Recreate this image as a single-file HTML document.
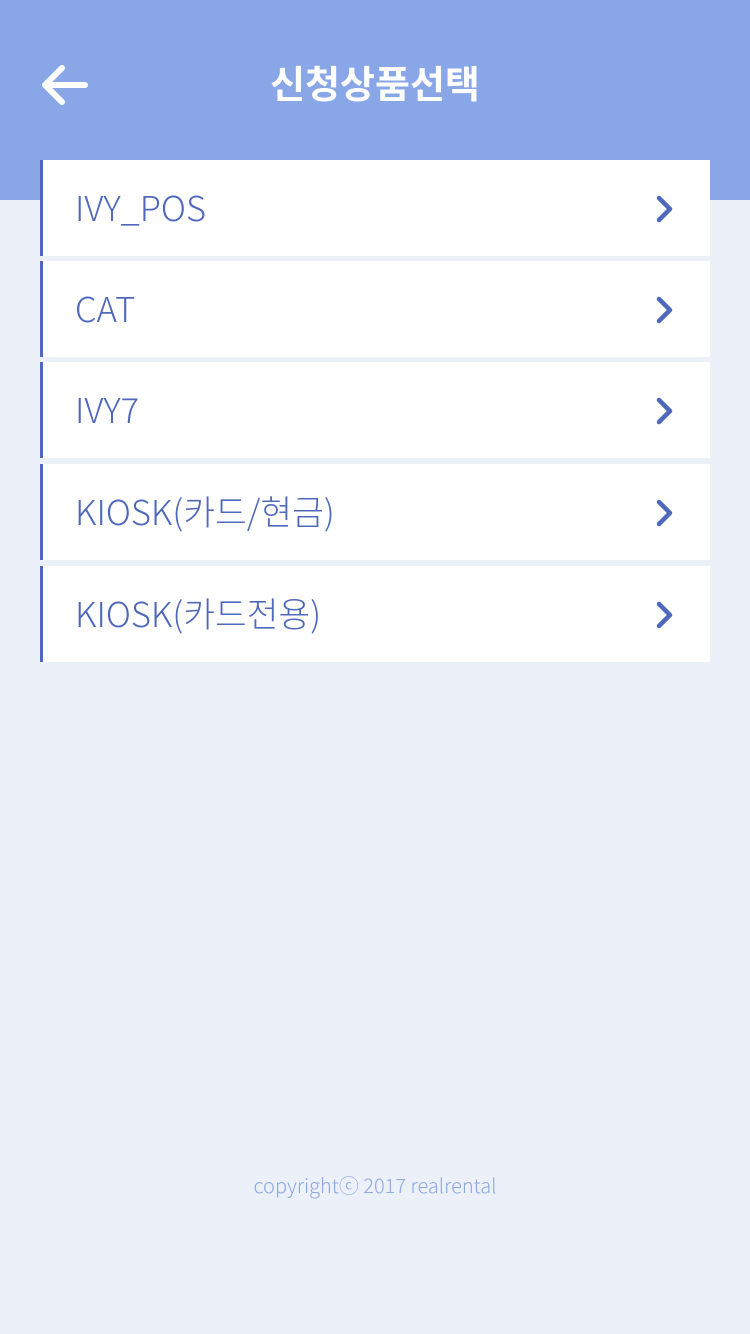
<!DOCTYPE html>
<html><head><meta charset="utf-8"><style>
body{margin:0;width:750px;height:1334px;background:#ecf0f9;font-family:"Liberation Sans","Noto Sans CJK KR",sans-serif;position:relative;overflow:hidden}
.hdr{position:absolute;left:0;top:0;width:750px;height:200px;background:#89a7e7}
.title{position:absolute;top:54px;left:0;width:750px;text-align:center;color:#fff;font-size:38px;font-weight:bold;font-family:"Noto Sans CJK KR",sans-serif}
.row{position:absolute;left:40px;width:670px;height:96px;background:#fff;border-left:3px solid #5068bb;box-sizing:border-box}
.row span{position:absolute;left:32px;top:21px;font-size:34.5px;color:#5068bb;font-family:"Noto Sans CJK KR",sans-serif;font-weight:300}
.row svg{position:absolute;left:608px;top:35px}
.foot{position:absolute;top:1170px;width:750px;text-align:center;color:#8ea8e2;font-size:20px;font-family:"Noto Sans CJK KR",sans-serif;font-weight:300}
</style></head><body>
<div class="hdr"></div>
<svg style="position:absolute;left:0;top:0" width="120" height="140"><path d="M62 68 L45 85 L62 102 M45 85 H85" stroke="#fff" stroke-width="6" fill="none" stroke-linecap="round" stroke-linejoin="round"/></svg>
<div class="title">신청상품선택</div>
<div class="row" style="top:160px"><span>IVY_POS</span><svg width="30" height="30"><path d="M8 3 L19 14 L8 25" stroke="#5068bb" stroke-width="4.5" fill="none" stroke-linecap="round" stroke-linejoin="round"/></svg></div>
<div class="row" style="top:261px"><span>CAT</span><svg width="30" height="30"><path d="M8 3 L19 14 L8 25" stroke="#5068bb" stroke-width="4.5" fill="none" stroke-linecap="round" stroke-linejoin="round"/></svg></div>
<div class="row" style="top:362px"><span>IVY7</span><svg width="30" height="30"><path d="M8 3 L19 14 L8 25" stroke="#5068bb" stroke-width="4.5" fill="none" stroke-linecap="round" stroke-linejoin="round"/></svg></div>
<div class="row" style="top:464px"><span>KIOSK(카드/현금)</span><svg width="30" height="30"><path d="M8 3 L19 14 L8 25" stroke="#5068bb" stroke-width="4.5" fill="none" stroke-linecap="round" stroke-linejoin="round"/></svg></div>
<div class="row" style="top:566px"><span>KIOSK(카드전용)</span><svg width="30" height="30"><path d="M8 3 L19 14 L8 25" stroke="#5068bb" stroke-width="4.5" fill="none" stroke-linecap="round" stroke-linejoin="round"/></svg></div>
<div class="foot">copyrightⓒ 2017 realrental</div>
</body></html>
